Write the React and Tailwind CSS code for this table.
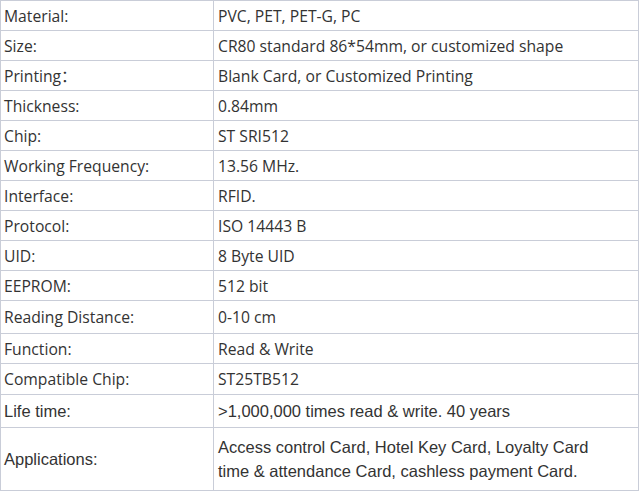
const ROWS = [
  { label: 'Material:', value: 'PVC, PET, PET-G, PC', h: 'h-[30px]' },
  { label: 'Size:', value: 'CR80 standard 86*54mm, or customized shape', h: 'h-[30px]' },
  { label: 'Printing：', value: 'Blank Card, or Customized Printing', h: 'h-[30px]' },
  { label: 'Thickness:', value: '0.84mm', h: 'h-[30px]' },
  { label: 'Chip:', value: 'ST SRI512', h: 'h-[30px]' },
  { label: 'Working Frequency:', value: '13.56 MHz.', h: 'h-[30px]' },
  { label: 'Interface:', value: 'RFID.', h: 'h-[30px]' },
  { label: 'Protocol:', value: 'ISO 14443 B', h: 'h-[30px]' },
  { label: 'UID:', value: '8 Byte UID', h: 'h-[30px]' },
  { label: 'EEPROM:', value: '512 bit', h: 'h-[30px]' },
  { label: 'Reading Distance:', value: '0-10 cm', h: 'h-[33px]' },
  { label: 'Function:', value: 'Read & Write', h: 'h-[30px]' },
  { label: 'Compatible Chip:', value: 'ST25TB512', h: 'h-[31px]' },
];

export default function App() {
  return (
    <div className="w-[640px] h-[491px] bg-white text-[#333] text-[15.7px] font-['Open_Sans','Noto_Sans_CJK_SC',sans-serif]">
      <table className="w-[639px] border-collapse">
        <tbody>
          {ROWS.map((row) => (
            <tr key={row.label} className={row.h}>
              <td className="w-[213px] border border-[#c9cdd8] pl-[3px] pt-[2px] pb-0 leading-none">{row.label}</td>
              <td className="border border-[#c9cdd8] pl-[4px] pt-[2px] pb-0 leading-none">{row.value}</td>
            </tr>
          ))}
          {/* last two rows come in a narrower Arial-like face */}
          <tr className="h-[33px] font-['Liberation_Sans',Arial,sans-serif] text-[16.5px]">
            <td className="border border-[#c9cdd8] pl-[3px] leading-none">Life time:</td>
            <td className="border border-[#c9cdd8] pl-[4px] leading-none">&gt;1,000,000 times read &amp; write. 40 years</td>
          </tr>
          <tr className="h-[63px] font-['Liberation_Sans',Arial,sans-serif] text-[16.5px]">
            <td className="border border-[#c9cdd8] pl-[3px]">Applications:</td>
            <td className="border border-[#c9cdd8] pl-[4px] leading-[24px]">
              Access control Card, Hotel Key Card, Loyalty Card
              <br />
              time &amp; attendance Card, cashless payment Card.
            </td>
          </tr>
        </tbody>
      </table>
    </div>
  );
}
